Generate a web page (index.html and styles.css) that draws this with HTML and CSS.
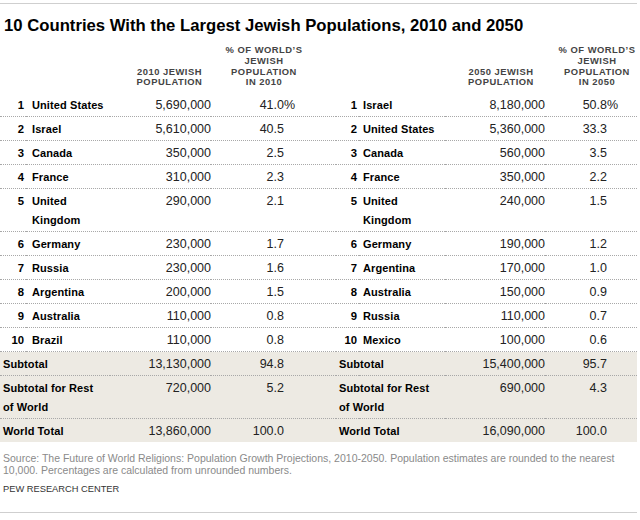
FILE: index.html
```html
<!DOCTYPE html>
<html lang="en">
<head>
<meta charset="utf-8">
<title>10 Countries With the Largest Jewish Populations</title>
<link rel="stylesheet" href="styles.css">
</head>
<body>
<div class="chart">
  <h1 class="title">10 Countries With the Largest Jewish Populations, 2010 and 2050</h1>
  <table class="tbl">
    <colgroup>
      <col class="c-rank-l"><col class="c-name-l"><col class="c-num-l"><col class="c-pct-l">
      <col class="c-rank-r"><col class="c-name-r"><col class="c-num-r"><col class="c-pct-r">
    </colgroup>
    <thead>
      <tr>
        <th></th><th></th>
        <th class="hd hd-num-l">2010 JEWISH<br>POPULATION</th>
        <th class="hd hd-pct-l">% OF WORLD’S<br>JEWISH<br>POPULATION<br>IN 2010</th>
        <th></th><th></th>
        <th class="hd hd-num-r">2050 JEWISH<br>POPULATION</th>
        <th class="hd hd-pct-r">% OF WORLD’S<br>JEWISH<br>POPULATION<br>IN 2050</th>
      </tr>
    </thead>
    <tbody>
      <tr>
        <td class="rank">1</td><td class="name name-l">United States</td><td class="num">5,690,000</td><td class="pct pct-l">41.0<span class="pc">%</span></td>
        <td class="rank">1</td><td class="name name-r">Israel</td><td class="num">8,180,000</td><td class="pct pct-r">50.8<span class="pc">%</span></td>
      </tr>
      <tr>
        <td class="rank">2</td><td class="name name-l">Israel</td><td class="num">5,610,000</td><td class="pct pct-l">40.5</td>
        <td class="rank">2</td><td class="name name-r">United States</td><td class="num">5,360,000</td><td class="pct pct-r">33.3</td>
      </tr>
      <tr>
        <td class="rank">3</td><td class="name name-l">Canada</td><td class="num">350,000</td><td class="pct pct-l">2.5</td>
        <td class="rank">3</td><td class="name name-r">Canada</td><td class="num">560,000</td><td class="pct pct-r">3.5</td>
      </tr>
      <tr>
        <td class="rank">4</td><td class="name name-l">France</td><td class="num">310,000</td><td class="pct pct-l">2.3</td>
        <td class="rank">4</td><td class="name name-r">France</td><td class="num">350,000</td><td class="pct pct-r">2.2</td>
      </tr>
      <tr>
        <td class="rank">5</td><td class="name name-l">United Kingdom</td><td class="num">290,000</td><td class="pct pct-l">2.1</td>
        <td class="rank">5</td><td class="name name-r">United Kingdom</td><td class="num">240,000</td><td class="pct pct-r">1.5</td>
      </tr>
      <tr>
        <td class="rank">6</td><td class="name name-l">Germany</td><td class="num">230,000</td><td class="pct pct-l">1.7</td>
        <td class="rank">6</td><td class="name name-r">Germany</td><td class="num">190,000</td><td class="pct pct-r">1.2</td>
      </tr>
      <tr>
        <td class="rank">7</td><td class="name name-l">Russia</td><td class="num">230,000</td><td class="pct pct-l">1.6</td>
        <td class="rank">7</td><td class="name name-r">Argentina</td><td class="num">170,000</td><td class="pct pct-r">1.0</td>
      </tr>
      <tr>
        <td class="rank">8</td><td class="name name-l">Argentina</td><td class="num">200,000</td><td class="pct pct-l">1.5</td>
        <td class="rank">8</td><td class="name name-r">Australia</td><td class="num">150,000</td><td class="pct pct-r">0.9</td>
      </tr>
      <tr>
        <td class="rank">9</td><td class="name name-l">Australia</td><td class="num">110,000</td><td class="pct pct-l">0.8</td>
        <td class="rank">9</td><td class="name name-r">Russia</td><td class="num">110,000</td><td class="pct pct-r">0.7</td>
      </tr>
      <tr>
        <td class="rank">10</td><td class="name name-l">Brazil</td><td class="num">110,000</td><td class="pct pct-l">0.8</td>
        <td class="rank">10</td><td class="name name-r">Mexico</td><td class="num">100,000</td><td class="pct pct-r">0.6</td>
      </tr>
      <tr class="total">
        <td class="label" colspan="2">Subtotal</td><td class="num">13,130,000</td><td class="pct pct-l">94.8</td>
        <td class="label" colspan="2">Subtotal</td><td class="num">15,400,000</td><td class="pct pct-r">95.7</td>
      </tr>
      <tr class="total">
        <td class="label" colspan="2">Subtotal for Rest of World</td><td class="num">720,000</td><td class="pct pct-l">5.2</td>
        <td class="label" colspan="2">Subtotal for Rest of World</td><td class="num">690,000</td><td class="pct pct-r">4.3</td>
      </tr>
      <tr class="total last">
        <td class="label" colspan="2">World Total</td><td class="num">13,860,000</td><td class="pct pct-l">100.0</td>
        <td class="label" colspan="2">World Total</td><td class="num">16,090,000</td><td class="pct pct-r">100.0</td>
      </tr>
    </tbody>
  </table>
  <p class="source">Source: The Future of World Religions: Population Growth Projections, 2010-2050. Population estimates are rounded to the nearest 10,000. Percentages are calculated from unrounded numbers.</p>
  <p class="credit">PEW RESEARCH CENTER</p>
</div>
</body>
</html>
```

FILE: styles.css
```css
html, body {
  margin: 0;
  padding: 0;
  background: #ffffff;
}

body {
  font-family: "Liberation Sans", Arial, sans-serif;
  color: #000;
}

.chart {
  width: 637px;
  margin-top: 3px;
  border-top: 1px solid #cfcfcf;
  border-bottom: 1px solid #cfcfcf;
  padding-bottom: 17px;
}

.title {
  margin: 12px 0 0 4px;
  font-size: 16.7px;
  line-height: 20px;
  font-weight: bold;
  color: #000;
}

.tbl {
  width: 637px;
  table-layout: fixed;
  border-collapse: collapse;
  border-spacing: 0;
  margin-top: 9px;
}

.c-rank-l { width: 26px; }
.c-name-l { width: 84px; }
.c-num-l { width: 101px; }
.c-pct-l { width: 125px; }
.c-rank-r { width: 23px; }
.c-name-r { width: 86px; }
.c-num-r { width: 100px; }
.c-pct-r { width: 92px; }

th {
  padding: 0 0 5px 0;
  vertical-align: bottom;
}

.hd {
  font-size: 9.4px;
  line-height: 10.8px;
  font-weight: bold;
  letter-spacing: 0.5px;
  color: #444;
  text-align: center;
  white-space: nowrap;
}

.hd-num-l { padding-left: 18px; }
.hd-pct-l { padding-right: 19px; }
.hd-num-r { padding-left: 12px; }
.hd-pct-r { padding-left: 12px; }

td {
  padding: 2.5px 0 1.5px 0;
  line-height: 19px;
  vertical-align: top;
  border-bottom: 1px dotted #a8a8a8;
}

.rank {
  text-align: right;
  padding-right: 2px;
  font-size: 11.3px;
  font-weight: bold;
}

.name {
  font-size: 11px;
  font-weight: bold;
  letter-spacing: 0.1px;
}

.name-l { padding-left: 6px; }
.name-r { padding-left: 4px; }

.num {
  text-align: right;
  font-size: 12.5px;
  color: #222;
}

.pct {
  text-align: right;
  font-size: 12.5px;
  color: #222;
}

.pct-l { padding-right: 52px; }
.pct-r { padding-right: 30px; }

.pc {
  display: inline-block;
  width: 0;
  overflow: visible;
}

.total td {
  background: #edeae3;
}

.label {
  padding-left: 3px;
  padding-right: 10px;
  font-size: 11px;
  font-weight: bold;
  letter-spacing: 0.1px;
}

.last td {
  border-bottom: none;
}

.source {
  margin: 10px 0 0 3px;
  font-size: 10.5px;
  line-height: 12px;
  color: #8a8a8a;
}

.credit {
  margin: 7px 0 0 3px;
  font-size: 9.3px;
  line-height: 12px;
  color: #333;
}
```
